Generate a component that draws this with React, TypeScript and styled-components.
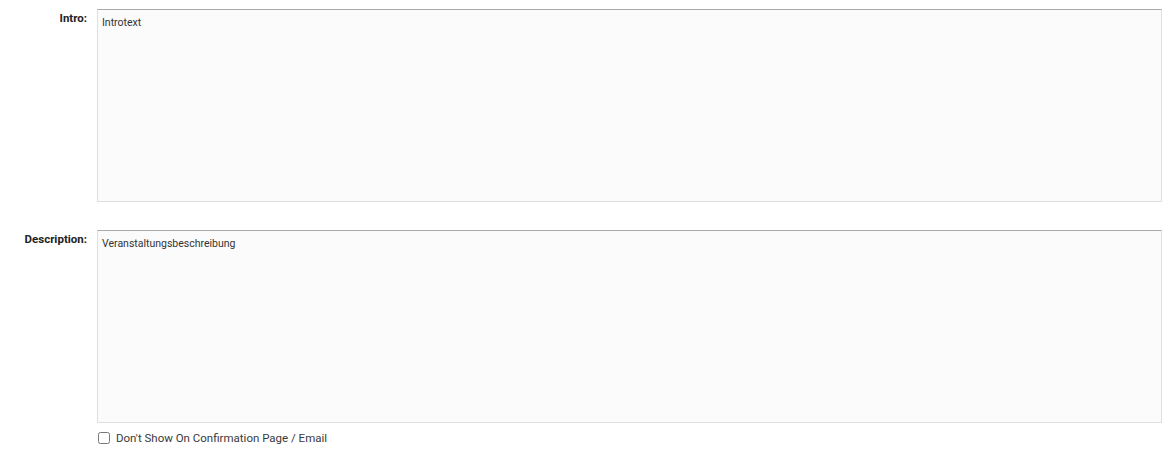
import React from 'react';
import styled, { createGlobalStyle } from 'styled-components';

const GlobalStyle = createGlobalStyle`
  body {
    margin: 0;
    background: #ffffff;
    font-family: Roboto, 'Liberation Sans', sans-serif;
  }
`;

const Form = styled.div`
  padding: 9px 7px 0 0;
  display: flex;
  flex-direction: column;
  gap: 28px;
`;

const Row = styled.div`
  display: grid;
  grid-template-columns: 87px 1fr;
  column-gap: 10px;
  align-items: start;
`;

const Label = styled.label`
  text-align: right;
  font-size: 11.5px;
  font-weight: 700;
  color: #222;
  padding-top: 2px;
  line-height: 14px;
`;

const Field = styled.div`
  display: flex;
  flex-direction: column;
`;

const TextArea = styled.textarea`
  box-sizing: border-box;
  width: 100%;
  height: 193px;
  margin: 0;
  padding: 7px 4px;
  resize: none;
  background: #fbfbfb;
  border: 1px solid #dcdfe3;
  border-top-color: #a9a9a9;
  border-radius: 0;
  font-family: Roboto, 'Liberation Sans', sans-serif;
  font-size: 10.5px;
  line-height: 12px;
  color: #333;
  outline: none;
`;

const CheckRow = styled.label`
  display: flex;
  align-items: center;
  gap: 6px;
  margin-top: 8px;
  font-size: 11.5px;
  color: #3a3a3a;
`;

const Check = styled.input`
  margin: 0 0 0 1px;
  width: 12px;
  height: 12px;
`;

const App: React.FC = () => (
  <>
    <GlobalStyle />
    <Form>
      <Row>
        <Label>Intro:</Label>
        <Field>
          <TextArea defaultValue="Introtext" />
        </Field>
      </Row>
      <Row>
        <Label>Description:</Label>
        <Field>
          <TextArea defaultValue="Veranstaltungsbeschreibung" />
          <CheckRow>
            <Check type="checkbox" />
            Don't Show On Confirmation Page / Email
          </CheckRow>
        </Field>
      </Row>
    </Form>
  </>
);

export default App;
